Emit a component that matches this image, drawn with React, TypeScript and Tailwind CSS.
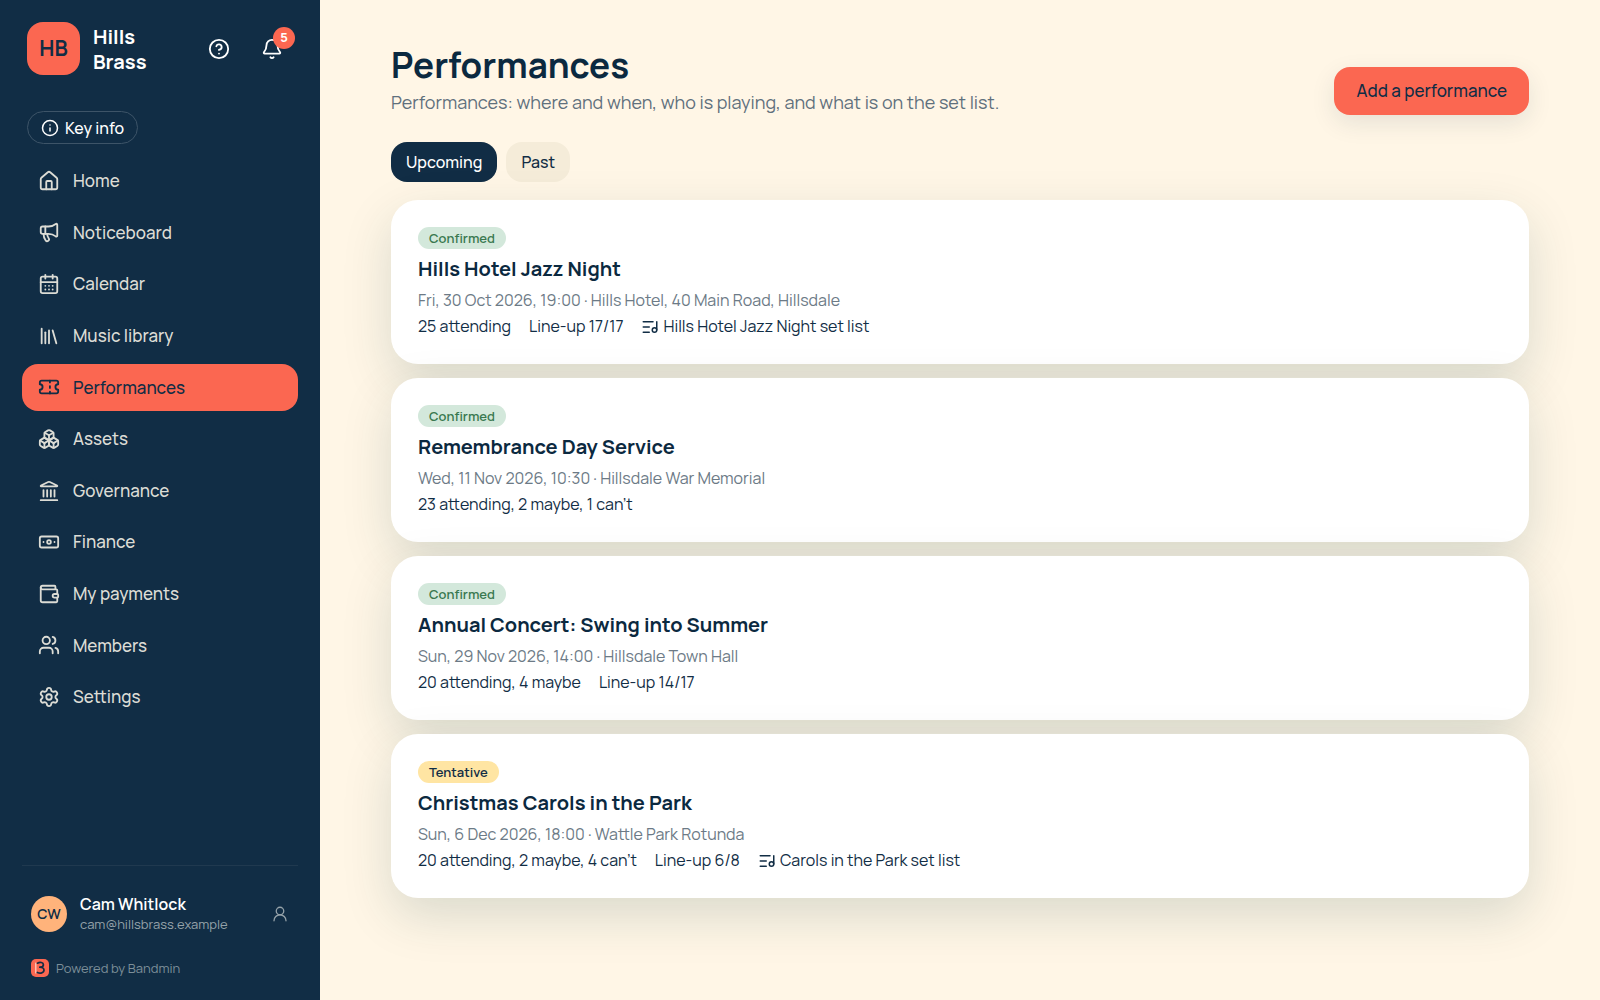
import React, { useState } from 'react';
import {
  Banknote,
  Bell,
  Boxes,
  CalendarDays,
  CircleQuestionMark,
  House,
  Info,
  Landmark,
  Library,
  ListMusic,
  LucideIcon,
  Megaphone,
  Settings,
  Ticket,
  UserRound,
  Users,
  Wallet,
} from 'lucide-react';

interface INavItem {
  label: string;
  icon: LucideIcon;
}

interface IPerformance {
  status: 'Confirmed' | 'Tentative';
  title: string;
  when: string;
  attendance: string;
  lineUp?: string;
  setList?: string;
}

const navItems: INavItem[] = [
  { label: 'Home', icon: House },
  { label: 'Noticeboard', icon: Megaphone },
  { label: 'Calendar', icon: CalendarDays },
  { label: 'Music library', icon: Library },
  { label: 'Performances', icon: Ticket },
  { label: 'Assets', icon: Boxes },
  { label: 'Governance', icon: Landmark },
  { label: 'Finance', icon: Banknote },
  { label: 'My payments', icon: Wallet },
  { label: 'Members', icon: Users },
  { label: 'Settings', icon: Settings },
];

const upcoming: IPerformance[] = [
  {
    status: 'Confirmed',
    title: 'Hills Hotel Jazz Night',
    when: 'Fri, 30 Oct 2026, 19:00 · Hills Hotel, 40 Main Road, Hillsdale',
    attendance: '25 attending',
    lineUp: 'Line-up 17/17',
    setList: 'Hills Hotel Jazz Night set list',
  },
  {
    status: 'Confirmed',
    title: 'Remembrance Day Service',
    when: 'Wed, 11 Nov 2026, 10:30 · Hillsdale War Memorial',
    attendance: '23 attending, 2 maybe, 1 can’t',
  },
  {
    status: 'Confirmed',
    title: 'Annual Concert: Swing into Summer',
    when: 'Sun, 29 Nov 2026, 14:00 · Hillsdale Town Hall',
    attendance: '20 attending, 4 maybe',
    lineUp: 'Line-up 14/17',
  },
  {
    status: 'Tentative',
    title: 'Christmas Carols in the Park',
    when: 'Sun, 6 Dec 2026, 18:00 · Wattle Park Rotunda',
    attendance: '20 attending, 2 maybe, 4 can’t',
    lineUp: 'Line-up 6/8',
    setList: 'Carols in the Park set list',
  },
];

const BandminLogo = () => (
  <svg viewBox="0 0 18 18" className="size-[18px]" aria-hidden="true">
    <rect width="18" height="18" rx="5" fill="#fb6751" />
    <path d="M4.8 4v10" stroke="#ffd9c7" strokeWidth="1.2" strokeLinecap="round" />
    <path
      d="M6.4 4.2c2.6-1.4 6-.9 6 1.6 0 1.8-1.8 2.4-3.6 2.4 2.4 0 4.2.8 4.2 2.9 0 3-3.8 3.6-6.6 2.4"
      fill="none"
      stroke="#112d45"
      strokeWidth="1.7"
      strokeLinecap="round"
      strokeLinejoin="round"
    />
  </svg>
);

const Sidebar = () => (
  <aside className="flex w-80 shrink-0 flex-col bg-[#112d45] px-[22px] pt-[22px] pb-[22px]">
    <div className="flex items-center pl-[5px]">
      <div className="flex size-[53px] items-center justify-center rounded-2xl bg-[#fb6751] text-[21px] font-bold text-[#112d45]">
        HB
      </div>
      <p className="ml-[13px] w-20 text-xl leading-[25px] font-bold text-white">Hills Brass</p>
      <div className="ml-auto flex">
        <button type="button" aria-label="Help" className="flex size-[53px] items-center justify-center text-white">
          <CircleQuestionMark size={22} />
        </button>
        <button
          type="button"
          aria-label="Notifications"
          className="relative flex size-[53px] items-center justify-center text-white"
        >
          <Bell size={22} />
          <span className="absolute top-[5px] right-[3px] flex size-[22px] items-center justify-center rounded-full bg-[#fb6751] text-[13px] font-bold">
            5
          </span>
        </button>
      </div>
    </div>

    <button
      type="button"
      className="mt-9 ml-[5px] flex h-[33px] items-center gap-1.5 self-start rounded-full border border-[#3d5468] px-[13px] text-base font-medium text-white"
    >
      <Info size={18} />
      Key info
    </button>

    <nav className="mt-[13px] flex flex-col gap-1">
      {navItems.map((item) => (
        <a
          key={item.label}
          href="#"
          className={`${item.label === 'Performances' ? 'bg-[#fb6751] text-[#112d45]' : 'text-[#dcdcd5]'} flex items-center gap-[13px] rounded-2xl px-4 py-2.5 text-[17px] leading-relaxed font-medium`}
        >
          <item.icon size={22} />
          {item.label}
        </a>
      ))}
    </nav>

    <div className="mt-auto border-t border-[#20394f] px-[9px] pt-7">
      <a href="#" className="flex items-center">
        <span className="flex size-9 items-center justify-center rounded-full bg-[#ffb37b] text-sm font-semibold text-[#112d45]">
          CW
        </span>
        <span className="ml-[13px] flex flex-col">
          <span className="text-base leading-5 font-semibold text-white">Cam Whitlock</span>
          <span className="text-[13px] leading-5 text-[#95a2a9]">cam@hillsbrass.example</span>
        </span>
        <UserRound size={18} strokeWidth={1.75} className="ml-auto text-[#95a2a9]" />
      </a>
      <p className="mt-6 flex items-center gap-[7px] text-[13px] leading-5 text-[#7d8f99]">
        <BandminLogo />
        Powered by Bandmin
      </p>
    </div>
  </aside>
);

const PerformanceCard = ({ data }: { data: IPerformance }) => (
  <article className="flex flex-col items-start rounded-[27px] bg-white px-[27px] pt-[27px] pb-6 shadow-[0_18px_50px_rgba(10,62,60,0.15)]">
    <span
      className={`${data.status === 'Confirmed' ? 'bg-[#d3e8db] text-[#39784f]' : 'bg-[#ffe5a3] text-[#112d45]'} rounded-full px-[11px] text-[13px] leading-[22px] font-semibold`}
    >
      {data.status}
    </span>
    <h2 className="mt-[5px] text-xl leading-[30px] font-bold text-[#0b2940]">{data.title}</h2>
    <p className="mt-[3px] text-base leading-[26px] text-[#6c7a86]">{data.when}</p>
    <div className="flex items-center gap-[18px] text-base leading-[27px] text-[#112d45]">
      <span>{data.attendance}</span>
      {data.lineUp && <span>{data.lineUp}</span>}
      {data.setList && (
        <a href="#" className="flex items-center gap-1">
          <ListMusic size={18} />
          {data.setList}
        </a>
      )}
    </div>
  </article>
);

export default function App() {
  const [tab, setTab] = useState<'Upcoming' | 'Past'>('Upcoming');

  return (
    <div className="flex min-h-screen bg-[#fff6e6] font-['Manrope','Inter',sans-serif]">
      <Sidebar />
      <main className="min-w-0 flex-1 px-[71px] pt-[44px] pb-16">
        <header className="flex items-end justify-between">
          <div>
            <h1 className="text-[35px] leading-[42px] font-bold text-[#0b2940]">Performances</h1>
            <p className="mt-[3px] text-lg leading-[26px] text-[#5f707d]">
              Performances: where and when, who is playing, and what is on the set list.
            </p>
          </div>
          <button
            type="button"
            className="h-12 rounded-2xl bg-[#fb6751] px-[22px] text-[17px] font-medium text-[#112d45] shadow-[0_8px_24px_rgba(17,45,69,0.10)]"
          >
            Add a performance
          </button>
        </header>

        <div className="mt-[27px] flex gap-[9px]">
          {(['Upcoming', 'Past'] as const).map((name) => (
            <button
              key={name}
              type="button"
              onClick={() => setTab(name)}
              className={`${tab === name ? 'bg-[#112d45] text-white' : 'bg-[#f5ecd9] text-[#112d45]'} h-10 rounded-2xl px-[15px] text-base font-medium`}
            >
              {name}
            </button>
          ))}
        </div>

        <section className="mt-[18px] flex flex-col gap-3.5">
          {tab === 'Upcoming' && upcoming.map((item) => <PerformanceCard key={item.title} data={item} />)}
        </section>
      </main>
    </div>
  );
}
